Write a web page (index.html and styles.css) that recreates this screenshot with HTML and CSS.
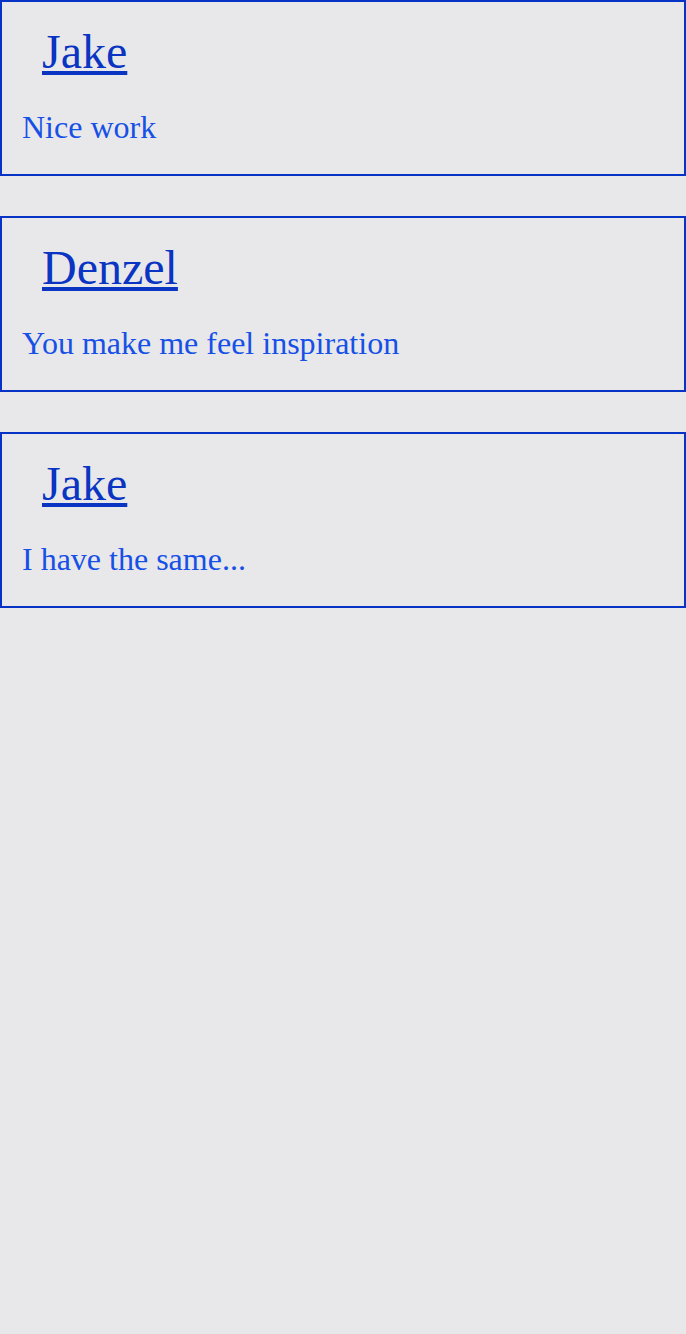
FILE: index.html
```html
<!DOCTYPE html>
<html>
<head>
<meta charset="utf-8">
<link rel="stylesheet" href="styles.css">
</head>
<body>
<div class="list">
  <div class="card">
    <a class="name" href="#">Jake</a>
    <p class="msg">Nice work</p>
  </div>
  <div class="card">
    <a class="name" href="#">Denzel</a>
    <p class="msg">You make me feel inspiration</p>
  </div>
  <div class="card">
    <a class="name" href="#">Jake</a>
    <p class="msg">I have the same...</p>
  </div>
</div>
</body>
</html>
```
FILE: styles.css
```css
html, body {
  margin: 0;
  padding: 0;
  background: #e8e8ea;
}
body {
  font-family: "Liberation Serif", "Times New Roman", serif;
  width: 686px;
  min-height: 1334px;
}
.list {
  display: flex;
  flex-direction: column;
  gap: 40px;
}
.card {
  border: 2px solid #0633c6;
  padding: 22px 20px 28px;
  display: flex;
  flex-direction: column;
  align-items: flex-start;
}
.name {
  font-size: 48px;
  line-height: 56px;
  color: #0a34c2;
  text-decoration: underline;
  margin: 0 0 29px 20px;
}
.msg {
  font-size: 32px;
  line-height: 37px;
  color: #1650e6;
  margin: 0;
}
```
